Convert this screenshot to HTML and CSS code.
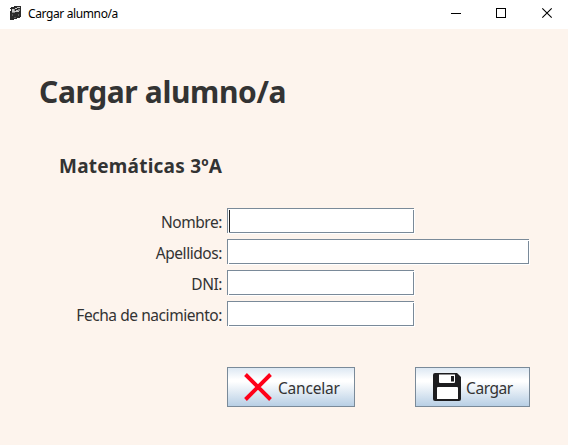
FILE: index.html
```html
<!DOCTYPE html>
<html lang="es">
<head>
<meta charset="utf-8">
<title>Cargar alumno/a</title>
<link rel="stylesheet" href="styles.css">
</head>
<body>
<header class="titlebar">
  <svg class="app-icon" width="12" height="15" viewBox="0 0 12 15" shape-rendering="crispEdges">
    <path fill="#2b2b2b" d="M1 1h3V0h7v11h-1v1H7v1H4v1H0V5h1V3H0V2h1z"/>
    <path fill="#c9c9c9" d="M2 3h2v2H2zM5 2h2v1H5zM7 1h3v1H7zM2 5h3v1H2zM6 4h3v1H6zM4 5h5v1H4z"/>
    <path fill="#8c8c8c" d="M4 3h1v2H4zM8 3h2v2H8zM2 6h3v1H2z"/>
    <path fill="#5c5c5c" d="M2 8h1v2H2zM8 8h1v2H8zM4 11h2v1H4z"/>
  </svg>
  <span class="window-title">Cargar alumno/a</span>
  <svg class="window-controls" width="138" height="28" viewBox="0 0 138 28" fill="none" stroke="#000">
    <path d="M21 13.500h10M66.500 8.500h9v9h-9z" shape-rendering="crispEdges"/>
    <path d="M112.300 8.300l9.400 9.400M121.700 8.300l-9.400 9.400" stroke-width="1.100"/>
  </svg>
</header>
<main class="content">
  <h1>Cargar alumno/a</h1>
  <h2>Matemáticas 3ºA</h2>
  <form class="form">
    <label for="nombre">Nombre:</label><div class="field focused" id="nombre"></div>
    <label for="apellidos">Apellidos:</label><div class="field wide" id="apellidos"></div>
    <label for="dni">DNI:</label><div class="field" id="dni"></div>
    <label for="fecha">Fecha de nacimiento:</label><div class="field" id="fecha"></div>
  </form>
  <div class="actions">
    <button type="button" class="cancel">
      <svg width="28" height="28" viewBox="0 0 28 28"><path d="M1.500 1.500l25 25M26.500 1.500l-25 25" stroke="#ff0019" stroke-width="3.900"/></svg>
      <span>Cancelar</span>
    </button>
    <button type="button" class="load">
      <svg width="28" height="28" viewBox="0 0 28 28">
        <path fill="#1d1d1f" d="M2 0h22l4 4v22q0 2-2 2H2q-2 0-2-2V2q0-2 2-2z"/>
        <path fill="#fff" d="M6 1.500h16V9q0 1-1 1H7q-1 0-1-1zM4 15q0-1 1-1h19q1 0 1 1v11H4z"/>
        <path fill="#1d1d1f" d="M18 3h3v5.500h-3z"/>
      </svg>
      <span>Cargar</span>
    </button>
  </div>
</main>
</body>
</html>
```

FILE: styles.css
```css
* { box-sizing: border-box; }
body {
  margin: 0;
  width: 568px;
  height: 445px;
  overflow: hidden;
  background: #fdf4ed;
  color: #333;
  font-family: "Noto Sans", "Open Sans", sans-serif;
}
svg { display: block; flex: none; }
.titlebar {
  display: flex;
  height: 29px;
  padding-left: 10px;
  background: #fff;
  color: #000;
}
.app-icon { margin-top: 6px; }
.window-title {
  margin-left: 6px;
  font-size: 12px;
  line-height: 28px;
  letter-spacing: -0.38px;
  white-space: nowrap;
}
.window-controls { margin-left: auto; }
.content { padding-left: 39px; }
h1, h2 { margin: 0; white-space: nowrap; }
h1 {
  padding-top: 42px;
  font-size: 30px;
  line-height: 42px;
  letter-spacing: -0.38px;
}
h2 {
  padding: 38px 0 0 20px;
  font-size: 19px;
  line-height: 30px;
  letter-spacing: 0.23px;
}
.form {
  display: grid;
  grid-template-columns: 183px auto;
  column-gap: 5px;
  row-gap: 6px;
  margin-top: 27px;
  justify-items: start;
}
.form label {
  justify-self: end;
  font-size: 15.5px;
  line-height: 28px;
  height: 25px;
  letter-spacing: -0.44px;
  white-space: nowrap;
}
.field {
  position: relative;
  width: 187px;
  height: 25px;
  border: 1px solid #7a8a99;
  background: #fff;
  box-shadow: 1px 1px 0 #fff;
}
/* white notches where the etched border lines meet */
.field::after {
  content: "";
  position: absolute;
  inset: 0 -1px -1px 0;
  background:
    linear-gradient(#fff, #fff) top right / 1px 1px no-repeat,
    linear-gradient(#fff, #fff) bottom left / 1px 1px no-repeat;
}
.wide { width: 302px; }
.focused::before {
  content: "";
  display: block;
  width: 1px;
  height: 22px;
  margin: 1px 0 0 1px;
  background: #222;
}
.actions {
  display: flex;
  gap: 60px;
  margin: 41px 0 0 188px;
}
button {
  display: flex;
  align-items: center;
  height: 40px;
  padding: 0 0 0 17px;
  border: 1px solid #7a8a99;
  background: linear-gradient(#dde8f3, #fff 30%, #fff 36%, #b8cfe5);
  color: #333;
  font: 15.5px/24px "Noto Sans", "Open Sans", sans-serif;
  white-space: nowrap;
}
button span { margin: 1px 0 0 5px; letter-spacing: -0.42px; }
.cancel { width: 128px; }
.cancel svg { margin-left: -1px; }
.cancel span { margin-left: 6px; letter-spacing: -0.2px; }
.load { width: 115px; }
```
